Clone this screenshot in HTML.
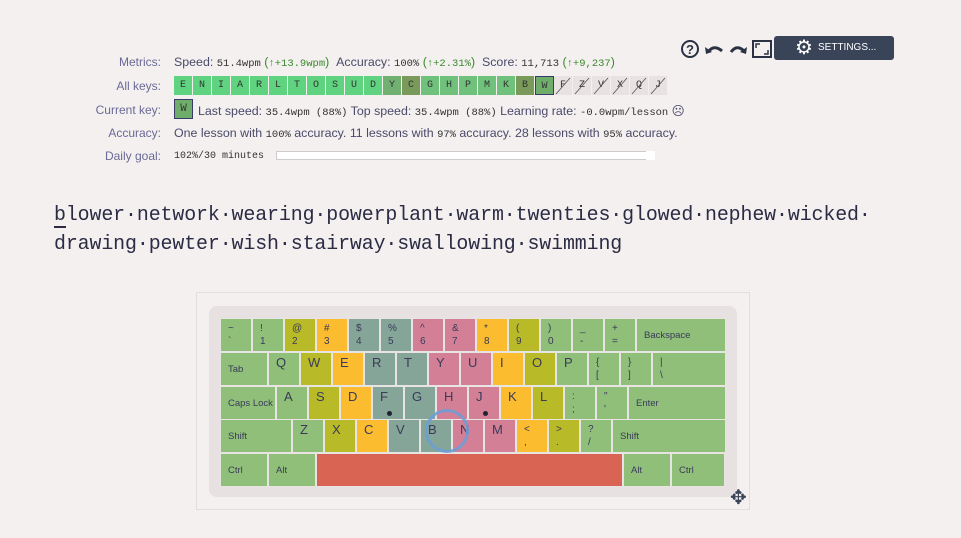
<!DOCTYPE html><html><head><style>
body{margin:0;width:961px;height:538px;background:#f3f0ef;font-family:"Liberation Sans",sans-serif;position:relative;overflow:hidden;color:#333}
.a{position:absolute}
.lab{position:absolute;right:800px;width:120px;text-align:right;color:#6a6a96;font-size:12px}
.v{position:absolute;left:174px;font-size:12.4px;color:#4a4a6a;white-space:nowrap}
.m{font-family:"Liberation Mono",monospace;font-size:10.5px;color:#333}
.g,.g .m{color:#3a8a2a}
.ak{position:absolute;top:76px;width:18px;height:19px;font:10px "Liberation Mono",monospace;text-align:center;line-height:19px;color:#333}
.words{position:absolute;left:54px;top:200px;font:19.9px/29px "Liberation Mono",monospace;color:#2b2b44;white-space:pre;letter-spacing:-0.1px}
.k{position:absolute;font-size:10px;color:#3a3a5a;box-sizing:border-box;border:1px solid #e8e4e3;white-space:nowrap}
.k span{position:absolute;left:7px}
.G{background:#8fbf78}.O{background:#b8bb27}.Y{background:#fbbd2f}.T{background:#84a597}.P{background:#d38097}
</style></head><body>
<div class="lab" style="top:55px">Metrics:</div>
<div class="v" style="top:55px">Speed: <span class="m">51.4wpm</span> <span class="g">(<span class="m">↑+13.9wpm</span>)</span> &nbsp;Accuracy: <span class="m">100%</span> <span class="g">(<span class="m">↑+2.31%</span>)</span> &nbsp;Score: <span class="m">11,713</span> <span class="g">(<span class="m">↑+9,237</span>)</span></div>
<div class="lab" style="top:79px">All keys:</div>
<div id="ak"></div>
<div class="lab" style="top:103px">Current key:</div>
<div class="a" style="left:174px;top:99px;width:17px;height:18px;background:#6fae6a;border:1px solid #3a3a6a;font:11px 'Liberation Mono',monospace;text-align:center;line-height:18px">W</div>
<div class="v" style="left:198px;top:103px">Last speed: <span class="m">35.4wpm (88%)</span> Top speed: <span class="m">35.4wpm (88%)</span> Learning rate: <span class="m">-0.0wpm/lesson</span> ☹</div>
<div class="lab" style="top:126px">Accuracy:</div>
<div class="v" style="top:126px">One lesson with <span class="m">100%</span> accuracy. 11 lessons with <span class="m">97%</span> accuracy. 28 lessons with <span class="m">95%</span> accuracy.</div>
<div class="lab" style="top:149px">Daily goal:</div>
<div class="v m" style="top:151px;font-size:10px">102%/30 minutes</div>
<div class="a" style="left:276px;top:151px;width:369px;height:7px;background:#fff;border:1px solid #ccc"></div>
<div class="a" style="left:646px;top:151px;width:9px;height:9px;background:#fff"></div>

<svg class="a" style="left:680px;top:39px" width="95" height="22" viewBox="0 0 95 22">
<circle cx="10" cy="10" r="8" fill="none" stroke="#2b3244" stroke-width="2"/><text x="10" y="15" font-size="13" font-weight="bold" text-anchor="middle" fill="#2b3244" font-family="Liberation Sans">?</text>
<path d="M28 13 Q34 5 42 12" fill="none" stroke="#2b3244" stroke-width="3"/><path d="M25 8 L26 15 L32 13Z" fill="#2b3244"/>
<path d="M51 13 Q57 5 64 12" fill="none" stroke="#2b3244" stroke-width="3"/><path d="M67 8 L66 15 L60 13Z" fill="#2b3244"/>
<rect x="73" y="2" width="18" height="16" fill="none" stroke="#2b3244" stroke-width="2"/><path d="M76 9V5H80M88 11V15H84" fill="none" stroke="#2b3244" stroke-width="1.5"/>
</svg>
<div class="a" style="left:774px;top:36px;width:120px;height:24px;background:#3a4459;border-radius:3px;color:#fff;font-size:10px;line-height:24px"><span style="position:absolute;left:21px;top:1px;font-size:20px;line-height:23px">⚙</span><span style="position:absolute;left:44px">SETTINGS...</span></div>

<div class="words">blower·network·wearing·powerplant·warm·twenties·glowed·nephew·wicked·
drawing·pewter·wish·stairway·swallowing·swimming</div>
<div class="a" style="left:54px;top:226px;width:12px;height:2px;background:#2b2b44"></div>

<div class="a" style="left:196px;top:292px;width:554px;height:218px;border:1px solid #e2dedd;box-sizing:border-box"></div>
<div class="a" style="left:209px;top:306px;width:528px;height:191px;background:#e8e1e1;border-radius:8px"></div>
<div id="kb"></div>
<div class="a" style="left:425px;top:409px;width:44px;height:44px;border:3px solid #6a9fd8;border-radius:50%;box-sizing:border-box;opacity:.85"></div>
<div class="a" style="left:730px;top:488px;font-size:20px;color:#3a4459;line-height:20px">✥</div>
<script>
var ak="E N I A R L T O S U D Y C G H P M K B W F Z V X Q J".split(" ");
var h="";ak.forEach(function(c,i){var bg=i<11?"#5fd37f":"#6fc17b";if(c=="Y")bg="#72b072";if(c=="C"||c=="B")bg="#7a9a5c";if(c=="W")bg="#6fae6a";if(i>=20)bg="#e8e2e2";
var st=c=="W"?"border:1px solid #3a3a6a;box-sizing:border-box;width:19px":"";
h+='<div class="ak" style="left:'+(174+i*19)+'px;background:'+bg+';'+st+'">'+c+(i>=20?'<svg style="position:absolute;left:0;top:0" width="18" height="19"><line x1="2" y1="18" x2="16" y2="2" stroke="#555" stroke-width=".8"/></svg>':'')+'</div>'});
document.getElementById("ak").innerHTML=h;
var rows=[
[318,[["~<br>`",1,"G"],["!<br>1",1,"G"],["@<br>2",1,"O"],["#<br>3",1,"Y"],["$<br>4",1,"T"],["%<br>5",1,"T"],["^<br>6",1,"P"],["&amp;<br>7",1,"P"],["*<br>8",1,"Y"],["(<br>9",1,"O"],[")<br>0",1,"G"],["_<br>-",1,"G"],["+<br>=",1,"G"],["Backspace",2.8,"G"]]],
[352,[["Tab",1.5,"G"],["Q",1,"G"],["W",1,"O"],["E",1,"Y"],["R",1,"T"],["T",1,"T"],["Y",1,"P"],["U",1,"P"],["I",1,"Y"],["O",1,"O"],["P",1,"G"],["{<br>[",1,"G"],["}<br>]",1,"G"],["|<br>\\",2.3,"G"]]],
[386,[["Caps Lock",1.75,"G"],["A",1,"G"],["S",1,"O"],["D",1,"Y"],["F",1,"T"],["G",1,"T"],["H",1,"P"],["J",1,"P"],["K",1,"Y"],["L",1,"O"],[":<br>;",1,"G"],["\"<br>'",1,"G"],["Enter",3.05,"G"]]],
[419,[["Shift",2.25,"G"],["Z",1,"G"],["X",1,"O"],["C",1,"Y"],["V",1,"T"],["B",1,"T"],["N",1,"P"],["M",1,"P"],["&lt;<br>,",1,"Y"],["&gt;<br>.",1,"O"],["?<br>/",1,"G"],["Shift",3.55,"G"]]],
[453,[["Ctrl",1.5,"G"],["Alt",1.5,"G"],["",9.6,"S"],["Alt",1.5,"G"],["Ctrl",1.7,"G"]]]];
var k="";rows.forEach(function(r){var x=220;r[1].forEach(function(q){var w=Math.round(q[1]*32);var big=/^[A-Z]$/.test(q[0]);var two=q[0].indexOf("<br>")>0;
var bg=q[2]=="S"?"background:#d96453":"";
var inner=big?'<span style="top:2px;font-size:13px">'+q[0]+'</span>':two?'<span style="top:3px;line-height:13px">'+q[0]+'</span>':'<span style="top:11px;font-size:9.5px">'+q[0]+'</span>';
if(q[0]=="F"||q[0]=="J")inner+='<div style="position:absolute;left:14px;top:24px;width:5px;height:5px;border-radius:50%;background:#223"></div>';
k+='<div class="k '+q[2]+'" style="left:'+x+'px;top:'+r[0]+'px;width:'+w+'px;height:34px;'+bg+'">'+inner+'</div>';x+=w;});});
document.getElementById("kb").innerHTML=k;
</script>
</body></html>
